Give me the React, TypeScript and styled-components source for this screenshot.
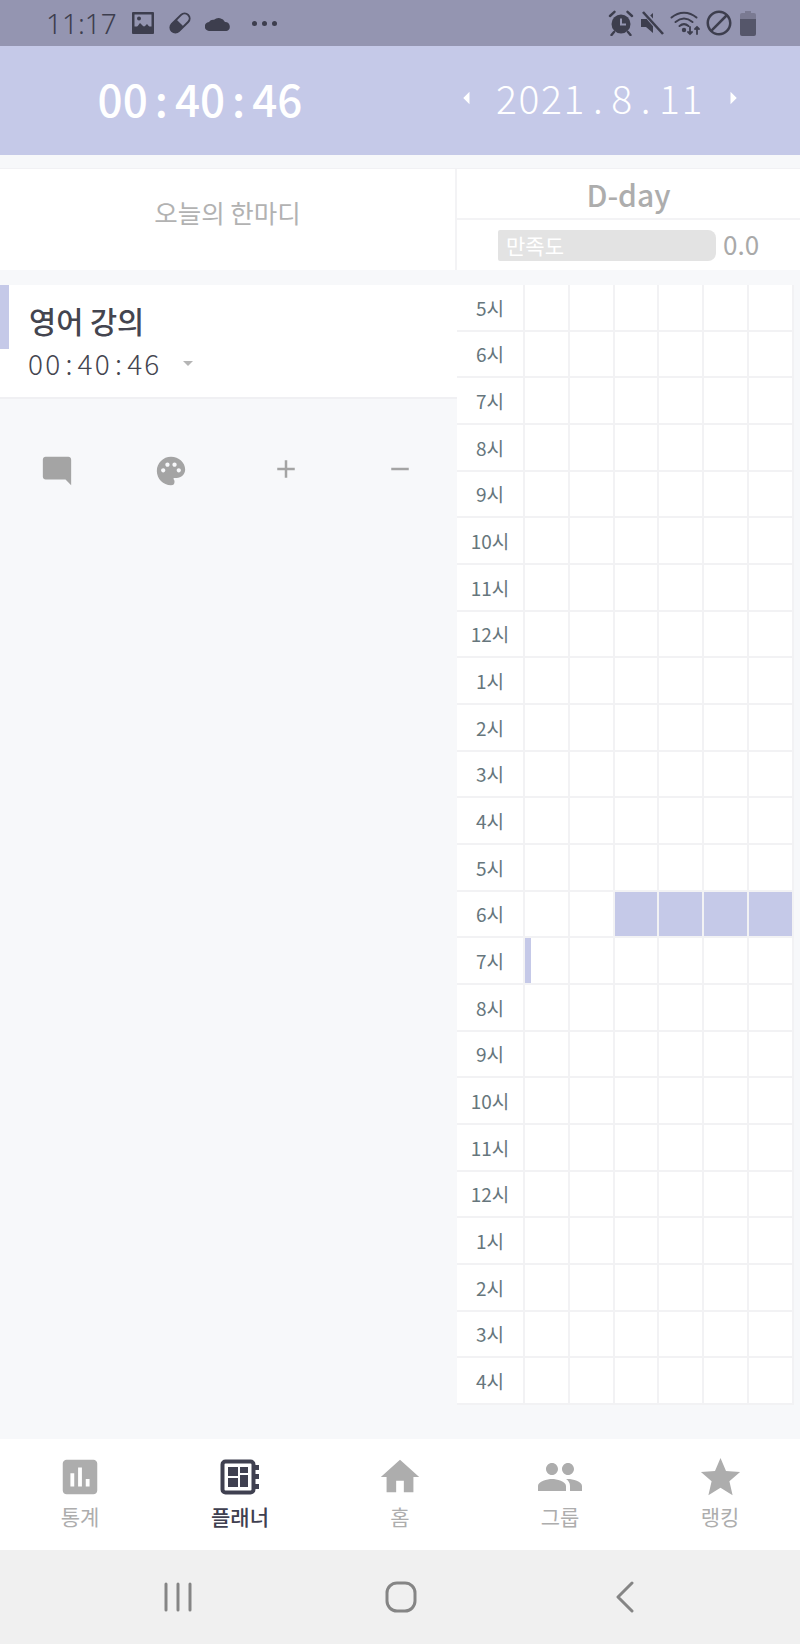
import React from "react";
import styled, { createGlobalStyle } from "styled-components";
import {
  MdAdd,
  MdAssessment,
  MdBlock,
  MdHome,
  MdModeComment,
  MdPalette,
  MdPeople,
  MdRemove,
  MdStar,
  MdArrowDropDown,
  MdArrowLeft,
  MdArrowRight,
} from "react-icons/md";

const ACCENT = "#c5c9e8";
const INK = "#3d3e4e";
const FONT = `"Noto Sans CJK KR", "Noto Sans", sans-serif`;

const GlobalStyle = createGlobalStyle`
  html, body {
    margin: 0;
    padding: 0;
    background: #f7f8fa;
    font-family: ${FONT};
  }
`;

const Page = styled.div`
  width: 800px;
  height: 1644px;
  display: flex;
  flex-direction: column;
  overflow: hidden;
  background-color: #f7f8fa;
`;

const StatusBar = styled.div`
  height: 46px;
  flex: none;
  display: flex;
  align-items: center;
  justify-content: space-between;
  padding: 0 44px 0 46px;
  background-color: #9495b1;
  color: ${INK};
`;

const StatusGroup = styled.div<{ $gap: number }>`
  display: flex;
  align-items: center;
  gap: ${(p) => p.$gap}px;
`;

const Clock = styled.span`
  font-family: "Noto Sans", sans-serif;
  font-size: 28px;
  font-weight: 300;
  line-height: 46px;
  margin-right: 1px;
`;

const Dots = styled.span`
  display: flex;
  gap: 5px;
  margin-left: 8px;

  i {
    width: 5px;
    height: 5px;
    border-radius: 50%;
    background-color: ${INK};
  }
`;

const BlockIcon = styled(MdBlock)`
  margin-left: -4px;
`;

const Header = styled.header`
  height: 109px;
  flex: none;
  display: grid;
  grid-template-columns: 1fr 1fr;
  align-items: center;
  padding-bottom: 6px;
  box-sizing: border-box;
  background-color: ${ACCENT};
  color: #fff;
`;

const Timer = styled.div`
  display: flex;
  justify-content: center;
  font-size: 44px;
  font-weight: 500;
  line-height: 1;
`;

const Sep = styled.span<{ $space: number }>`
  margin: 0 ${(p) => p.$space}px;
`;

const DateRow = styled.div`
  display: flex;
  align-items: center;
  justify-content: center;
  font-size: 39px;
  font-weight: 300;
  letter-spacing: 1.6px;
  line-height: 1;

  svg:first-child {
    margin-right: 14px;
  }

  svg:last-child {
    margin-left: 14px;
  }
`;

const TopRow = styled.section`
  height: 102px;
  flex: none;
  margin-top: 13px;
  display: flex;
  background-color: #fff;
  border-top: 1px solid #f1f1f4;
  box-sizing: border-box;
`;

const Motto = styled.div`
  width: 457px;
  flex: none;
  box-sizing: border-box;
  border-right: 2px solid #f3f3f5;
  padding-bottom: 16px;
  display: flex;
  align-items: center;
  justify-content: center;
  font-size: 25.5px;
  color: #b2b2b2;
`;

const Summary = styled.div`
  flex: 1;
  display: flex;
  flex-direction: column;
`;

const DDay = styled.div`
  height: 51px;
  box-sizing: border-box;
  border-bottom: 2px solid #f3f3f5;
  display: flex;
  align-items: center;
  justify-content: center;
  font-size: 30px;
  font-weight: 500;
  color: #adadad;
`;

const Rating = styled.div`
  flex: 1;
  display: flex;
  align-items: center;
  padding-left: 41px;
  gap: 7px;
`;

const RatingBar = styled.div`
  width: 218px;
  height: 31px;
  box-sizing: border-box;
  padding-left: 8px;
  border-radius: 2px 8px 8px 2px;
  background-color: #e3e3e3;
  color: #fff;
  font-size: 21px;
  line-height: 31px;
`;

const RatingValue = styled.span`
  margin-bottom: 3px;
  font-size: 26px;
  color: #a9a9a9;
`;

const Body = styled.main`
  flex: 1;
  display: flex;
  align-items: flex-start;
  margin-top: 15px;
`;

const LeftColumn = styled.div`
  width: 457px;
  flex: none;
`;

const TaskCard = styled.div`
  position: relative;
  height: 114px;
  box-sizing: border-box;
  padding: 14px 0 0 29px;
  background-color: #fff;
  border-bottom: 2px solid #f0f0f3;
`;

const TaskMarker = styled.span`
  position: absolute;
  left: 0;
  top: 0;
  width: 9px;
  height: 64px;
  background-color: ${ACCENT};
`;

const TaskName = styled.div`
  font-size: 29.5px;
  font-weight: 500;
  line-height: 42px;
  color: #44454f;
`;

const TaskTime = styled.div`
  display: flex;
  align-items: center;
  margin-top: 3px;
  margin-left: -1px;
  font-size: 28px;
  font-weight: 300;
  letter-spacing: 2.2px;
  line-height: 38px;
  color: #44454f;

  svg {
    margin-left: 14px;
    color: #b5b5b5;
  }
`;

const Actions = styled.div`
  display: grid;
  grid-template-columns: repeat(4, 1fr);
  justify-items: center;
  margin-top: 55px;
  color: #a4a4a4;
`;

const Grid = styled.div`
  width: 337px;
  height: 1120px;
  display: grid;
  grid-template-columns: 68px repeat(6, 44.8px);
  grid-template-rows: repeat(24, 1fr);
  background-color: #fff;
`;

const HourLabel = styled.div`
  display: flex;
  align-items: center;
  justify-content: center;
  box-sizing: border-box;
  border-right: 2px solid #f2f2f4;
  border-bottom: 2px solid #f2f2f4;
  font-size: 19px;
  color: #66767c;
`;

const Cell = styled.div`
  box-sizing: border-box;
  border-right: 2px solid #f2f2f4;
  border-bottom: 2px solid #f2f2f4;
`;

const CellFill = styled.div<{ $width: number }>`
  width: ${(p) => p.$width}%;
  height: 100%;
  background-color: ${ACCENT};
`;

const BottomNav = styled.nav`
  height: 111px;
  flex: none;
  display: grid;
  grid-template-columns: repeat(5, 1fr);
  background-color: #fff;
`;

const NavItem = styled.div<{ $active?: boolean }>`
  display: flex;
  flex-direction: column;
  align-items: center;
  padding-top: 18px;
  color: ${(p) => (p.$active ? "#3f4050" : "#adadad")};
`;

const NavIcon = styled.div`
  height: 40px;
  display: flex;
  align-items: center;
  justify-content: center;
`;

const NavLabel = styled.span<{ $active?: boolean }>`
  margin-top: 4px;
  font-size: 21px;
  line-height: 30px;
  font-weight: ${(p) => (p.$active ? 500 : 400)};
`;

const SystemNav = styled.div`
  height: 94px;
  flex: none;
  display: grid;
  grid-template-columns: repeat(3, 1fr);
  align-items: center;
  justify-items: center;
  padding: 0 63px 0 66px;
  background-color: #f0f0f0;
  color: #858585;
`;

const PictureIcon = () => (
  <svg width="24" height="24" viewBox="0 0 24 24">
    <rect x="1" y="1" width="22" height="22" rx="1" fill="#3d3e4e" />
    <rect x="3.5" y="3.5" width="17" height="12" fill="#9495b1" />
    <circle cx="8" cy="7.5" r="2" fill="#3d3e4e" />
    <path d="M3 20l6-8 4 4 3-3 5 6v2H3z" fill="#3d3e4e" />
  </svg>
);

const PillIcon = () => (
  <svg width="24" height="24" viewBox="0 0 24 24">
    <g transform="rotate(-45 12 12)">
      <rect x="0.5" y="7" width="23" height="10" rx="5" fill="none" stroke="#3d3e4e" strokeWidth="2" />
      <path d="M5.5 7H12V17H5.5a5 5 0 0 1 0-10z" fill="#3d3e4e" />
    </g>
  </svg>
);

const CloudIcon = () => (
  <svg width="26" height="16" viewBox="0 0 26 16">
    <path
      d="M4.5 16A4.5 4.5 0 0 1 4 7a5 5 0 0 1 5-2.2A7 7 0 0 1 20 7a4.6 4.6 0 0 1 1.5 9z"
      fill="#3d3e4e"
    />
  </svg>
);

const AlarmIcon = () => (
  <svg width="26" height="26" viewBox="0 0 26 26">
    <circle cx="13" cy="14" r="9.5" fill="#3d3e4e" />
    <path d="M13 8.5V14.5H18" fill="none" stroke="#9495b1" strokeWidth="2" />
    <path d="M2 6L6.5 1.8M24 6L19.5 1.8M6 22l-2.5 3M20 22l2.5 3" stroke="#3d3e4e" strokeWidth="2.4" strokeLinecap="round" />
  </svg>
);

const MuteIcon = () => (
  <svg width="24" height="24" viewBox="0 0 24 24">
    <path d="M1 8h5l7-6v20l-7-6H1z" fill="#3d3e4e" />
    <path d="M4 1l19 22" stroke="#9495b1" strokeWidth="5" />
    <path d="M3 1l20 22" stroke="#3d3e4e" strokeWidth="2.6" />
  </svg>
);

const WifiIcon = () => (
  <svg width="32" height="26" viewBox="0 0 32 26" fill="none" stroke="#3d3e4e" strokeWidth="2" strokeLinecap="round">
    <path d="M1.5 7.5C9 1 19 1 26.5 7.5" />
    <path d="M5.5 12C11 7.5 17 7.5 22.5 12" />
    <path d="M9.5 16c3-2.5 6-2.5 9 0" />
    <circle cx="14" cy="20" r="1.2" fill="#3d3e4e" />
    <path d="M20 17v7M18 22l2 2 2-2M27 24v-7M25 19l2-2 2 2" strokeWidth="1.8" />
  </svg>
);

const BatteryIcon = () => (
  <svg width="16" height="25" viewBox="0 0 16 25">
    <path d="M5 0h6v2h3a2 2 0 0 1 2 2v4H0V4a2 2 0 0 1 2-2h3z" fill="#7a7a92" />
    <path d="M0 8h16v15a2 2 0 0 1-2 2H2a2 2 0 0 1-2-2z" fill="#55566a" />
  </svg>
);

const PlannerIcon = () => (
  <svg width="40" height="36" viewBox="0 0 40 36">
    <rect x="2.5" y="2.5" width="31" height="31" rx="3" fill="none" stroke="currentColor" strokeWidth="4" />
    <rect x="8" y="8" width="10" height="9" fill="currentColor" />
    <rect x="20" y="8" width="8" height="6" fill="currentColor" />
    <rect x="8" y="19" width="10" height="9" fill="currentColor" />
    <rect x="20" y="16" width="8" height="12" fill="currentColor" />
    <path d="M35 6h4v5h-4zM35 15h4v5h-4zM35 25h4v5h-4z" fill="currentColor" />
  </svg>
);

const RecentsIcon = () => (
  <svg width="30" height="30" viewBox="0 0 30 30">
    <path d="M3 2v26M15 2v26M27 2v26" stroke="currentColor" strokeWidth="3" strokeLinecap="round" />
  </svg>
);

const HomeButtonIcon = () => (
  <svg width="32" height="32" viewBox="0 0 32 32">
    <rect x="2" y="2" width="28" height="28" rx="10" fill="none" stroke="currentColor" strokeWidth="3" />
  </svg>
);

const BackIcon = () => (
  <svg width="20" height="32" viewBox="0 0 20 32">
    <path d="M17 2L3 16l14 14" fill="none" stroke="currentColor" strokeWidth="3" strokeLinecap="round" strokeLinejoin="round" />
  </svg>
);

const HOURS = [5, 6, 7, 8, 9, 10, 11, 12, 1, 2, 3, 4, 5, 6, 7, 8, 9, 10, 11, 12, 1, 2, 3, 4];

// [row, cell] -> fill percent
const FILLS: Record<string, number> = {
  "13-2": 100,
  "13-3": 100,
  "13-4": 100,
  "13-5": 100,
  "14-0": 14,
};

const NAV = [
  { label: "통계", icon: <MdAssessment size={46} /> },
  { label: "플래너", icon: <PlannerIcon />, active: true },
  { label: "홈", icon: <MdHome size={46} /> },
  { label: "그룹", icon: <MdPeople size={48} /> },
  { label: "랭킹", icon: <MdStar size={47} /> },
];

export default function App() {
  return (
    <Page>
      <GlobalStyle />
      <StatusBar>
        <StatusGroup $gap={13}>
          <Clock>11:17</Clock>
          <PictureIcon />
          <PillIcon />
          <CloudIcon />
          <Dots>
            <i />
            <i />
            <i />
          </Dots>
        </StatusGroup>
        <StatusGroup $gap={6}>
          <AlarmIcon />
          <MuteIcon />
          <WifiIcon />
          <BlockIcon size={30} />
          <BatteryIcon />
        </StatusGroup>
      </StatusBar>

      <Header>
        <Timer>
          00<Sep $space={7}>:</Sep>40<Sep $space={7}>:</Sep>46
        </Timer>
        <DateRow>
          <MdArrowLeft size={30} />
          <span>
            2021<Sep $space={7}>.</Sep>8<Sep $space={7}>.</Sep>11
          </span>
          <MdArrowRight size={30} />
        </DateRow>
      </Header>

      <TopRow>
        <Motto>오늘의 한마디</Motto>
        <Summary>
          <DDay>D-day</DDay>
          <Rating>
            <RatingBar>만족도</RatingBar>
            <RatingValue>0.0</RatingValue>
          </Rating>
        </Summary>
      </TopRow>

      <Body>
        <LeftColumn>
          <TaskCard>
            <TaskMarker />
            <TaskName>영어 강의</TaskName>
            <TaskTime>
              <span>
                00<Sep $space={3}>:</Sep>40<Sep $space={3}>:</Sep>46
              </span>
              <MdArrowDropDown size={24} />
            </TaskTime>
          </TaskCard>
          <Actions>
            <MdModeComment size={34} />
            <MdPalette size={34} />
            <MdAdd size={30} />
            <MdRemove size={30} />
          </Actions>
        </LeftColumn>

        <Grid>
          {HOURS.map((hour, row) => (
            <React.Fragment key={row}>
              <HourLabel>{hour}시</HourLabel>
              {[0, 1, 2, 3, 4, 5].map((col) => {
                const fill = FILLS[`${row}-${col}`];
                return <Cell key={col}>{fill ? <CellFill $width={fill} /> : null}</Cell>;
              })}
            </React.Fragment>
          ))}
        </Grid>
      </Body>

      <BottomNav>
        {NAV.map((item) => (
          <NavItem key={item.label} $active={item.active}>
            <NavIcon>{item.icon}</NavIcon>
            <NavLabel $active={item.active}>{item.label}</NavLabel>
          </NavItem>
        ))}
      </BottomNav>

      <SystemNav>
        <RecentsIcon />
        <HomeButtonIcon />
        <BackIcon />
      </SystemNav>
    </Page>
  );
}
